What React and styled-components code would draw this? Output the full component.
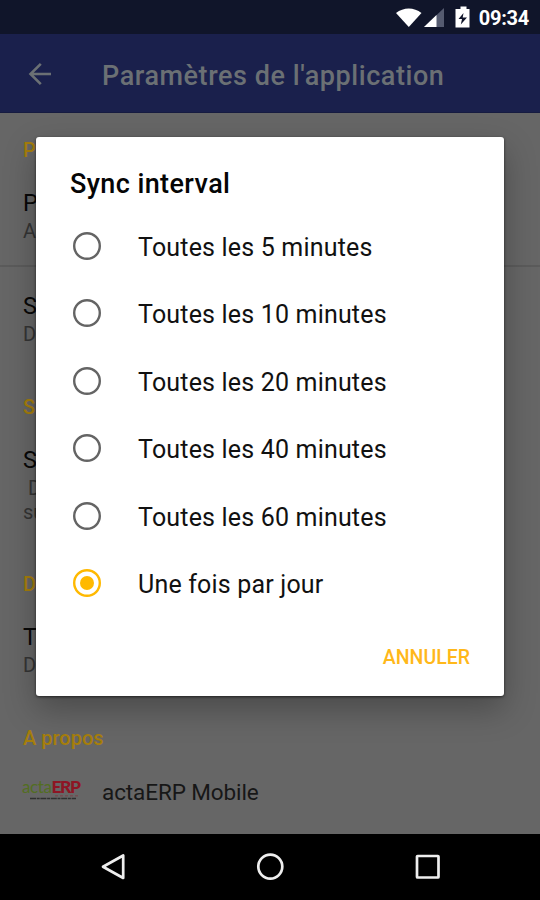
import React from "react";
import styled, { createGlobalStyle } from "styled-components";

const GlobalStyle = createGlobalStyle`
  *, *::before, *::after { box-sizing: border-box; }
  body { margin: 0; background: #666; }
`;

const Screen = styled.div`
  position: relative;
  display: flex;
  flex-direction: column;
  width: 540px;
  height: 900px;
  overflow: hidden;
  background: #666;
  font-family: Roboto, sans-serif;
  color: #080808;
`;

const StatusBar = styled.header`
  display: flex;
  align-items: center;
  justify-content: flex-end;
  flex: none;
  height: 34px;
  padding: 2px 11px 0 0;
  background: #10152a;
`;

const StatusIcons = styled.svg`
  display: block;
  width: 78px;
  height: 24px;
  margin-right: 5px;
`;

const Clock = styled.span`
  font-size: 20px;
  line-height: 24px;
  font-weight: 700;
  letter-spacing: -0.25px;
  color: #fff;
`;

const AppBar = styled.div`
  display: flex;
  align-items: center;
  flex: none;
  height: 79px;
  padding: 1px 25px 0;
  background: #1a204c;
  border-bottom: 1px solid #161b40;
`;

const BackIcon = styled.svg`
  display: block;
  width: 28px;
  height: 28px;
  margin-right: 49px;
`;

const AppTitle = styled.h1`
  margin: 0;
  padding-top: 4px;
  font-size: 27px;
  line-height: 32px;
  font-weight: 500;
  letter-spacing: 0.56px;
  color: #6b7074;
  white-space: nowrap;
`;

const Settings = styled.main`
  display: flex;
  flex-direction: column;
  flex: 1;
  min-height: 0;
`;

const Section = styled.section`
  flex: none;
  height: ${(p) => p.$height}px;
  padding: 25px 0 0 23px;
`;

const SectionTitle = styled.h2`
  margin: 0 0 26px;
  font-size: 20px;
  line-height: 24px;
  font-weight: 500;
  letter-spacing: 0;
  color: #a67e0b;
`;

const Preference = styled.div`
  height: ${(p) => p.$height}px;
  padding-top: ${(p) => p.$top ?? 0}px;
`;

const PreferenceTitle = styled.div`
  font-size: 23.5px;
  line-height: 30px;
`;

const PreferenceSummary = styled.div`
  padding-left: ${(p) => p.$indent ?? 0}px;
  font-size: 20px;
  line-height: ${(p) => p.$line ?? 27}px;
  color: #343434;
`;

const Divider = styled.div`
  height: 2px;
  margin-left: -23px;
  background: #5b5b5b;
`;

const About = styled.div`
  display: flex;
  align-items: center;
  height: 32px;
`;

const Logo = styled.div`
  width: 60px;
  margin: -4px 20px 0 -1px;
`;

const LogoName = styled.div`
  font-family: Lato, sans-serif;
  font-size: 17px;
  line-height: 16px;
  letter-spacing: -0.4px;
  color: #536e22;
  white-space: nowrap;
`;

const LogoSuffix = styled.b`
  font-family: Lato, sans-serif;
  font-size: 17.5px;
  font-weight: 900;
  letter-spacing: -1.5px;
  color: #8e1524;
`;

const LogoRule = styled.svg`
  display: block;
  width: 60px;
  height: 6px;
`;

const AboutName = styled.div`
  font-size: 22.5px;
  line-height: 30px;
  letter-spacing: -0.1px;
  color: #171717;
`;

const NavBar = styled.nav`
  display: flex;
  align-items: center;
  justify-content: center;
  gap: 129px;
  flex: none;
  height: 66px;
  background: #000;
`;

const NavIcon = styled.svg`
  display: block;
  width: 28px;
  height: 28px;
  fill: none;
  stroke: #eee;
  stroke-width: 2.7;
  stroke-linejoin: round;
`;

const Dialog = styled.div`
  position: absolute;
  left: 36px;
  top: 137px;
  display: flex;
  flex-direction: column;
  width: 468px;
  height: 559px;
  padding: 31px 34px 0;
  border-radius: 3px;
  background: #fff;
  box-shadow: 0 13px 32px rgba(0, 0, 0, 0.28), 0 1px 3px rgba(0, 0, 0, 0.6);
`;

const DialogTitle = styled.h2`
  margin: 0 0 11px;
  font-size: 27px;
  line-height: 33px;
  font-weight: 500;
  letter-spacing: 0.4px;
  color: #050505;
`;

const Option = styled.div`
  display: flex;
  align-items: center;
  flex: none;
  height: 67.5px;
`;

const RadioIcon = styled.svg`
  display: block;
  width: 28px;
  height: 28px;
  margin: 0 37px 0 3px;
  color: ${(p) => (p.$checked ? "#ffb900" : "#646464")};
`;

const OptionLabel = styled.span`
  padding-top: 4px;
  font-size: 25px;
  line-height: 32px;
  letter-spacing: 0.18px;
  color: #111;
  white-space: nowrap;
`;

const CancelButton = styled.button`
  align-self: flex-end;
  margin: 28px 0 0;
  padding: 0;
  border: 0;
  background: none;
  font-family: inherit;
  font-size: 19.5px;
  line-height: 26px;
  font-weight: 500;
  color: #ffb81a;
`;

const intervals = [
  "Toutes les 5 minutes",
  "Toutes les 10 minutes",
  "Toutes les 20 minutes",
  "Toutes les 40 minutes",
  "Toutes les 60 minutes",
  "Une fois par jour",
];

function Radio({ checked }) {
  return (
    <RadioIcon $checked={checked} viewBox="0 0 28 28">
      <circle cx="14" cy="14" r="12.8" fill="none" stroke="currentColor" strokeWidth="2.4" />
      {checked && <circle cx="14" cy="14" r="7" fill="currentColor" />}
    </RadioIcon>
  );
}

export default function App() {
  return (
    <>
      <GlobalStyle />
      <Screen>
        <StatusBar>
          <StatusIcons viewBox="0 0 78 24" fill="#fff">
            <path d="M0 7C7.5 .9 18 .9 25.5 7L12.8 21Z" />
            <path d="M48 2V21H28Z" fill="#555b70" />
            <path d="M40.5 9V21H28Z" />
            <path
              fillRule="evenodd"
              d="M64.5 .5h6v2.5h3V21.5h-14V3h5ZM67.5 7L62.5 13h3.5l-1.2 5.5L71 11.5h-4.3Z"
            />
          </StatusIcons>
          <Clock>09:34</Clock>
        </StatusBar>
        <AppBar>
          <BackIcon viewBox="0 0 28 28" fill="none" stroke="#6b7074" strokeWidth="2.6">
            <path d="M26 14H5.5M15.8 3.8L5.5 14L15.8 24.2" />
          </BackIcon>
          <AppTitle>Paramètres de l'application</AppTitle>
        </AppBar>
        <Settings>
          <Section $height={257}>
            <SectionTitle>P</SectionTitle>
            <Preference $height={77}>
              <PreferenceTitle>P</PreferenceTitle>
              <PreferenceSummary>A</PreferenceSummary>
            </Preference>
            <Divider />
            <Preference $height={90} $top={24}>
              <PreferenceTitle>S</PreferenceTitle>
              <PreferenceSummary>D</PreferenceSummary>
            </Preference>
          </Section>
          <Section $height={177}>
            <SectionTitle>S</SectionTitle>
            <Preference $height={90}>
              <PreferenceTitle>S</PreferenceTitle>
              <PreferenceSummary $indent={5}>D</PreferenceSummary>
              <PreferenceSummary $line={21}>su</PreferenceSummary>
            </Preference>
          </Section>
          <Section $height={154}>
            <SectionTitle>D</SectionTitle>
            <Preference $height={60}>
              <PreferenceTitle>T</PreferenceTitle>
              <PreferenceSummary>D</PreferenceSummary>
            </Preference>
          </Section>
          <Section $height={133}>
            <SectionTitle>A propos</SectionTitle>
            <About>
              <Logo>
                <LogoName>
                  acta<LogoSuffix>ERP</LogoSuffix>
                </LogoName>
                <LogoRule viewBox="0 0 60 6">
                  <path d="M8 3.5H54" stroke="#303030" strokeWidth="1.5" strokeDasharray="6 .7 3 .7" />
                  <path d="M33 .8H57" stroke="#8e1524" strokeOpacity=".3" strokeWidth="1.6" strokeDasharray="3 2" />
                </LogoRule>
              </Logo>
              <AboutName>actaERP Mobile</AboutName>
            </About>
          </Section>
        </Settings>
        <NavBar>
          <NavIcon viewBox="0 0 28 28">
            <path d="M24.2 2.5V25L4 13.7Z" />
          </NavIcon>
          <NavIcon viewBox="0 0 28 28">
            <circle cx="14.3" cy="13.6" r="12" />
          </NavIcon>
          <NavIcon viewBox="0 0 28 28">
            <rect x="4" y="3" width="21.5" height="21.5" rx="0.6" />
          </NavIcon>
        </NavBar>
        <Dialog role="dialog" aria-label="Sync interval">
          <DialogTitle>Sync interval</DialogTitle>
          {intervals.map((label, i) => (
            <Option key={label}>
              <Radio checked={i === 5} />
              <OptionLabel>{label}</OptionLabel>
            </Option>
          ))}
          <CancelButton>ANNULER</CancelButton>
        </Dialog>
      </Screen>
    </>
  );
}
